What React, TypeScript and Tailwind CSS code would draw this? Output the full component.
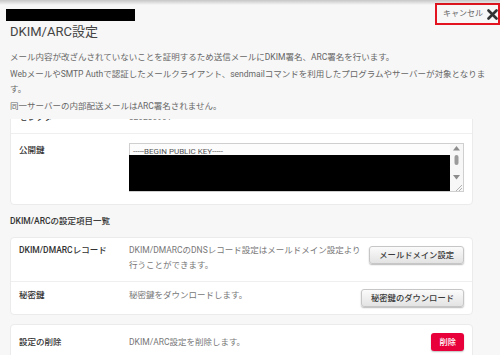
import React from 'react';

function GrayButton({ children, className = '' }: { children: React.ReactNode; className?: string }) {
  return (
    <button
      type="button"
      className={`h-[18px] shrink-0 px-[9px] rounded-[3px] border border-[#c6c6c6] bg-linear-to-b from-[#fbfbfb] to-[#e3e3e3] shadow-[0_1px_1.5px_rgba(0,0,0,0.28)] text-[8.3px] leading-none font-medium text-[#3a3a3a] whitespace-nowrap ${className}`}
    >
      {children}
    </button>
  );
}

function Card({ children, className = '' }: { children: React.ReactNode; className?: string }) {
  return (
    <div className={`mx-[10px] w-[463px] bg-white border border-[#ebebeb] rounded-[4px] ${className}`}>
      {children}
    </div>
  );
}

const labelCls = 'w-[110px] shrink-0 text-[8.5px] leading-[15px] font-medium text-[#333]';
const descCls = 'flex-1 text-[8.5px] leading-[15px] text-[#777] whitespace-nowrap';

// faux textarea scrollbar (arrows, thumb, resize grip)
function ScrollBar() {
  return (
    <svg width="13" height="47" viewBox="0 0 13 47" className="shrink-0 bg-[#f7f7f7]">
      <polygon points="3,6.5 10,6.5 6.5,2" fill="#8c8c8c" />
      <rect x="4.5" y="11" width="4" height="10" rx="2" fill="#9b9b9b" />
      <polygon points="3,31 10,31 6.5,35.5" fill="#8c8c8c" />
      <line x1="12" y1="41" x2="6" y2="47" stroke="#a0a0a0" strokeWidth="0.8" />
      <line x1="12" y1="44" x2="9" y2="47" stroke="#a0a0a0" strokeWidth="0.8" />
    </svg>
  );
}

export default function App() {
  return (
    <div className="relative w-[500px] h-[355px] overflow-hidden bg-[#f7f7f7] font-[Roboto,'Noto_Sans_CJK_JP',sans-serif]">
      <div className="pointer-events-none absolute inset-x-0 top-0 z-10 h-[5px] bg-linear-to-b from-black/20 to-transparent" />

      <header className="h-[119px]">
        <div className="flex h-[24px] items-start">
          <div className="ml-[6px] mt-[9px] h-[12px] w-[129px] bg-black" />
          <button
            type="button"
            className="ml-auto mt-[3px] flex h-[22px] w-[65px] items-center gap-[4px] border-2 border-[#e3141f] pl-[6px]"
          >
            <span className="text-[8px] leading-none text-[#666]">キャンセル</span>
            <svg width="11" height="11" viewBox="0 0 11 11">
              <path d="M1.5 1.5 L9.5 9.5 M9.5 1.5 L1.5 9.5" stroke="#333" strokeWidth="2.6" strokeLinecap="round" />
            </svg>
          </button>
        </div>
        <h1 className="pl-[10px] text-[13px] leading-[16px] text-[#444]">DKIM/ARC設定</h1>
        <div className="mt-[10px] flex flex-col gap-[2px] whitespace-nowrap pl-[10px] text-[8.5px] leading-[15px] text-[#666]">
          <p>メール内容が改ざんされていないことを証明するため送信メールにDKIM署名、ARC署名を行います。</p>
          <p>
            WebメールやSMTP Authで認証したメールクライアント、sendmailコマンドを利用したプログラムやサーバーが対象となりま
            <br />
            す。
          </p>
          <p>同一サーバーの内部配送メールはARC署名されません。</p>
        </div>
      </header>

      <div className="h-[236px] overflow-hidden">
        <div className="mt-[-17px]">
          <Card>
            <div className="flex items-start border-b border-[#efefef] px-[8px] pb-[8px] pt-[7px]">
              <div className={labelCls}>セレクタ</div>
              <div className={descCls}>s20230901</div>
            </div>
            <div className="flex items-start px-[8px] pb-[12px] pt-[9px]">
              <div className={labelCls}>公開鍵</div>
              <div className="flex h-[49px] w-[338px] border border-[#cfcfcf] bg-[#fcfcfc]">
                <div className="flex-1">
                  <div className="mt-[2px] h-[9px] pl-[3px] text-[8px] leading-[11px] text-[#555]">
                    -----BEGIN PUBLIC KEY-----
                  </div>
                  <div className="ml-[-1px] h-[36px] bg-black" />
                </div>
                <ScrollBar />
              </div>
            </div>
          </Card>

          <h2 className="mb-[8px] mt-[9px] pl-[10px] text-[8.5px] font-medium leading-[15px] text-[#333]">
            DKIM/ARCの設定項目一覧
          </h2>

          <Card>
            <div className="flex items-start border-b border-[#efefef] px-[8px] pb-[8px] pt-[5px]">
              <div className={labelCls}>DKIM/DMARCレコード</div>
              <div className={descCls}>
                DKIM/DMARCのDNSレコード設定はメールドメイン設定より
                <br />
                行うことができます。
              </div>
              <GrayButton className="mt-[3px] h-[17px]">メールドメイン設定</GrayButton>
            </div>
            <div className="flex items-start px-[8px] pb-[7px] pt-[6px]">
              <div className={labelCls}>秘密鍵</div>
              <div className={descCls}>秘密鍵をダウンロードします。</div>
              <GrayButton className="mt-[1px]">秘密鍵のダウンロード</GrayButton>
            </div>
          </Card>

          <Card className="mt-[9px]">
            <div className="flex items-start px-[8px] pb-[8px] pt-[8px]">
              <div className={`${labelCls} mt-[2px]`}>設定の削除</div>
              <div className={`${descCls} mt-[2px]`}>DKIM/ARC設定を削除します。</div>
              <button
                type="button"
                className="h-[18px] shrink-0 rounded-[3px] bg-[#e8003b] px-[8px] text-[8.3px] font-medium leading-none text-white shadow-[0_1px_1.5px_rgba(0,0,0,0.25)]"
              >
                削除
              </button>
            </div>
          </Card>
        </div>
      </div>
    </div>
  );
}
